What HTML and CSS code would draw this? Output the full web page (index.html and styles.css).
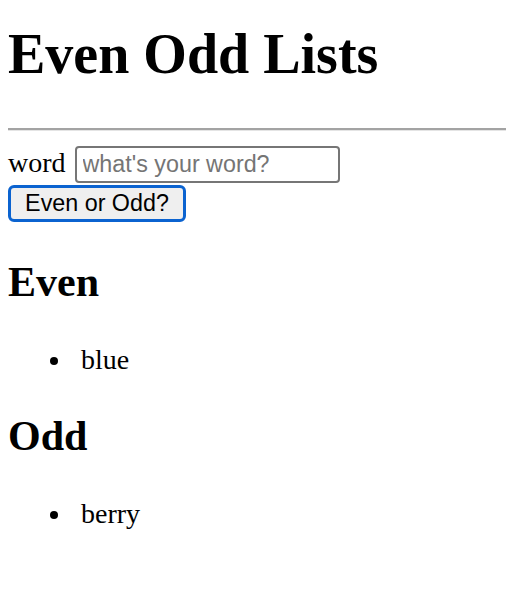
FILE: index.html
```html
<!DOCTYPE html>
<html>
<head>
<meta charset="utf-8">
<link rel="stylesheet" href="styles.css">
</head>
<body>
<h1 class="title">Even Odd Lists</h1>
<hr class="rule">
<form class="word-form">
  <label class="word-label">word <input class="word-input" type="text" placeholder="what's your word?"></label><br>
  <button class="check-btn" type="button">Even or Odd?</button>
</form>
<h2 class="list-title">Even</h2>
<ul class="word-list"><li>blue</li></ul>
<h2 class="list-title">Odd</h2>
<ul class="word-list"><li>berry</li></ul>
</body>
</html>
```
FILE: styles.css
```css
html, body {
  background: #ffffff;
}
body {
  margin: 22px 0 0 8px;
  font-family: "Liberation Serif", "Times New Roman", serif;
  font-size: 28px;
  color: #000;
}
.title {
  font-size: 56px;
  font-weight: bold;
  margin: 0 0 42px 0;
}
.rule {
  margin: 0 0 15px 0;
  border: 0;
  border-top: 2px solid #a3a3a3;
  border-bottom: 1px solid #e4e4e4;
  height: 0;
}
.word-form {
  margin: 0;
}
.word-label {
  line-height: 1.15;
}
.word-input {
  box-sizing: border-box;
  width: 265px;
  height: 37px;
  padding: 0 6px;
  border: 2px solid #767676;
  border-radius: 4px;
  font-family: "Liberation Sans", Arial, sans-serif;
  font-size: 23.3px;
  color: #000;
  vertical-align: baseline;
  margin: 0 0 0 2px;
}
.word-input::placeholder {
  color: #757575;
}
.check-btn {
  box-sizing: border-box;
  margin: 2px 0 0 0;
  height: 37px;
  width: 178px;
  padding: 0 10px;
  background: #efefef;
  border: 3px solid #0b63d0;
  border-radius: 6px;
  font-family: "Liberation Sans", Arial, sans-serif;
  font-size: 23.3px;
  color: #000;
}
.list-title {
  font-size: 42px;
  font-weight: bold;
  margin: 36px 0 38px 0;
}
.word-list {
  margin: 38px 0 36px 0;
  padding-left: 73px;
  list-style: none;
}
.word-list li::before {
  content: "";
  display: inline-block;
  width: 8px;
  height: 8px;
  border-radius: 50%;
  background: #000;
  margin-left: -31px;
  margin-right: 23px;
  vertical-align: 4px;
}
```
